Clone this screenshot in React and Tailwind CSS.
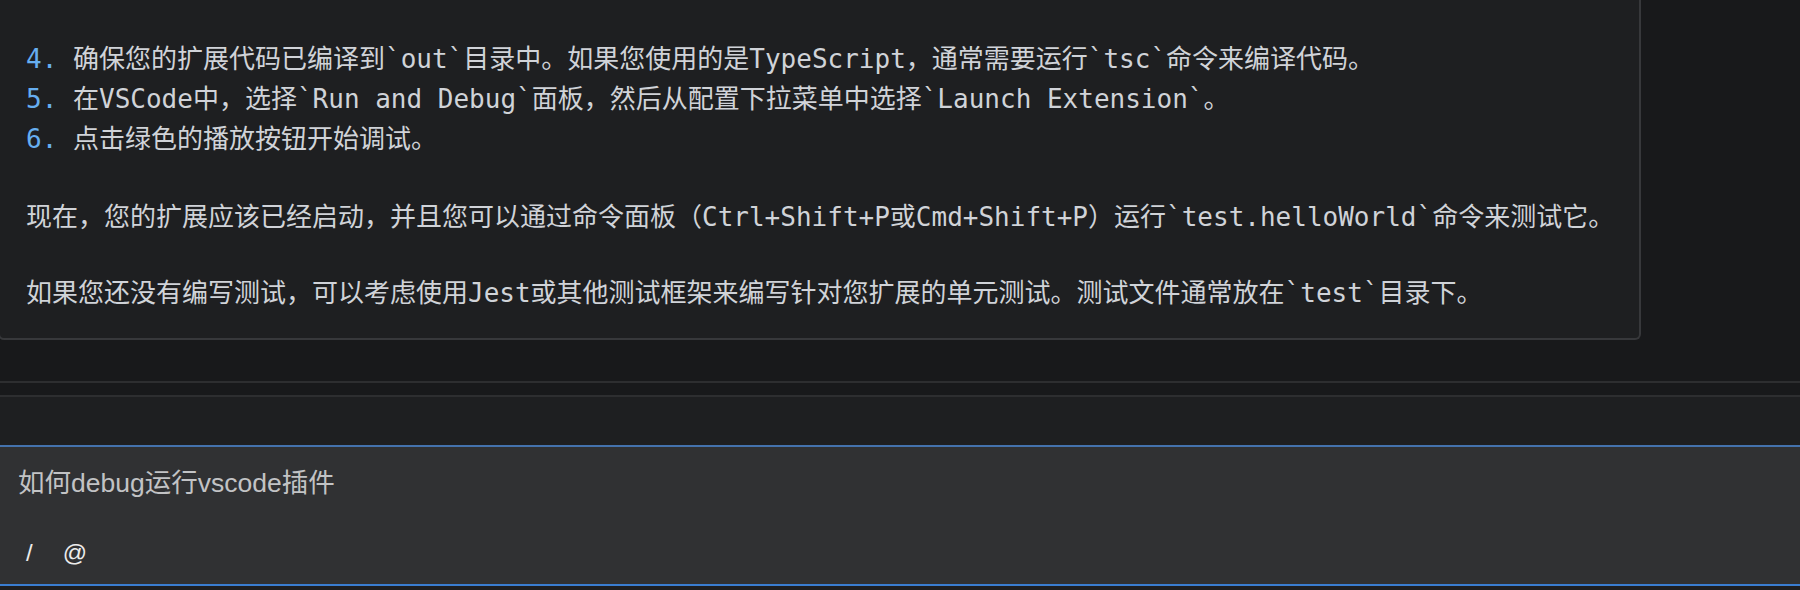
import React from "react";

const steps = [
  {
    n: "4.",
    text: "确保您的扩展代码已编译到`out`目录中。如果您使用的是TypeScript，通常需要运行`tsc`命令来编译代码。",
  },
  {
    n: "5.",
    text: "在VSCode中，选择`Run and Debug`面板，然后从配置下拉菜单中选择`Launch Extension`。",
  },
  { n: "6.", text: "点击绿色的播放按钮开始调试。" },
];

const Answer = () => {
  return (
    <div className="-ml-[2px] w-[1643px] shrink-0 rounded-b-[6px] border-x-2 border-b-2 border-[#37383b] bg-[#1e1f21] pl-[26px] pt-[39px] pb-[25px] font-['DejaVu_Sans_Mono','Noto_Sans_CJK_SC',monospace] text-[26px] leading-[40px] text-[#d0d3d8] whitespace-pre">
      {steps.map((s) => (
        <div key={s.n} className="flex">
          <span className="w-[47px] shrink-0 text-[#66aef0]">{s.n}</span>
          <span>{s.text}</span>
        </div>
      ))}
      <p className="mt-[38px]">
        现在，您的扩展应该已经启动，并且您可以通过命令面板（Ctrl+Shift+P或Cmd+Shift+P）运行`test.helloWorld`命令来测试它。
      </p>
      <p className="mt-[36px]">
        如果您还没有编写测试，可以考虑使用Jest或其他测试框架来编写针对您扩展的单元测试。测试文件通常放在`test`目录下。
      </p>
    </div>
  );
};

const Composer = () => {
  return (
    <div className="flex flex-col border-y-2 border-t-[#4472ad] border-b-[#3a7dd1] bg-[#303133] font-['Liberation_Sans','Noto_Sans_CJK_SC',sans-serif]">
      <div className="h-[72px] pl-[18px] pt-[21px] text-[26.5px] leading-[30px] text-[#c2c3c5]">
        如何debug运行vscode插件
      </div>
      <div className="flex h-[65px] items-start gap-[30px] pl-[26px] pt-[19px] text-[24px] leading-[30px] text-[#ebebeb]">
        <button className="cursor-pointer">/</button>
        <button className="cursor-pointer">@</button>
      </div>
    </div>
  );
};

const App = () => {
  return (
    <div className="flex h-[590px] w-[1800px] flex-col overflow-hidden bg-[#18191b]">
      <Answer />
      <div className="mt-[41px] h-[2px] bg-[#2d2e30]" />
      <div className="h-[12px] bg-[#18191b]" />
      <div className="h-[2px] bg-[#2d2e30]" />
      <div className="h-[48px] bg-[#1e1f21]" />
      <Composer />
      <div className="flex-1 bg-[#1e1f21]" />
    </div>
  );
};

export default App;
